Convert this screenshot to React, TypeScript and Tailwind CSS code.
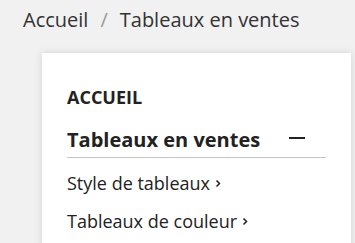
function Chevron() {
  return (
    <svg width="6" height="9" viewBox="0 0 6 9" className="shrink-0" aria-hidden="true">
      <path d="M1.5 1.5 L4.5 4.5 L1.5 7.5" fill="none" stroke="#222" strokeWidth="1.5" />
    </svg>
  );
}

export default function App() {
  return (
    <div className="min-h-[243px] bg-[#f1f1f1] font-['Open_Sans',sans-serif] text-[#222] overflow-hidden">
      <nav className="flex items-center pl-[23px] pt-[6px] text-[20px] leading-[28px] text-[#333]">
        <span>Accueil</span>
        <span className="mx-[12px] text-[#999]">/</span>
        <span>Tableaux en ventes</span>
      </nav>
      <div className="ml-[42px] mt-[19px] w-[309px] bg-white shadow-[0_0_8px_rgba(0,0,0,0.12)] px-[25px] pt-[32px] pb-[20px]">
        <div className="text-[18px] font-bold leading-[24px]">ACCUEIL</div>
        <div className="mt-[17px] flex items-center justify-between border-b border-[#c4c4c4] pb-[3px]">
          <span className="text-[20px] font-bold leading-[28px]">Tableaux en ventes</span>
          <span className="mr-[21px] mb-[5px] block h-[2px] w-[16px] bg-[#222]" />
        </div>
        <ul className="mt-[6px] text-[18px] leading-[38px]">
          <li className="flex items-center gap-[5px]">
            <span>Style de tableaux</span>
            <Chevron />
          </li>
          <li className="flex items-center gap-[5px]">
            <span>Tableaux de couleur</span>
            <Chevron />
          </li>
        </ul>
      </div>
    </div>
  );
}
